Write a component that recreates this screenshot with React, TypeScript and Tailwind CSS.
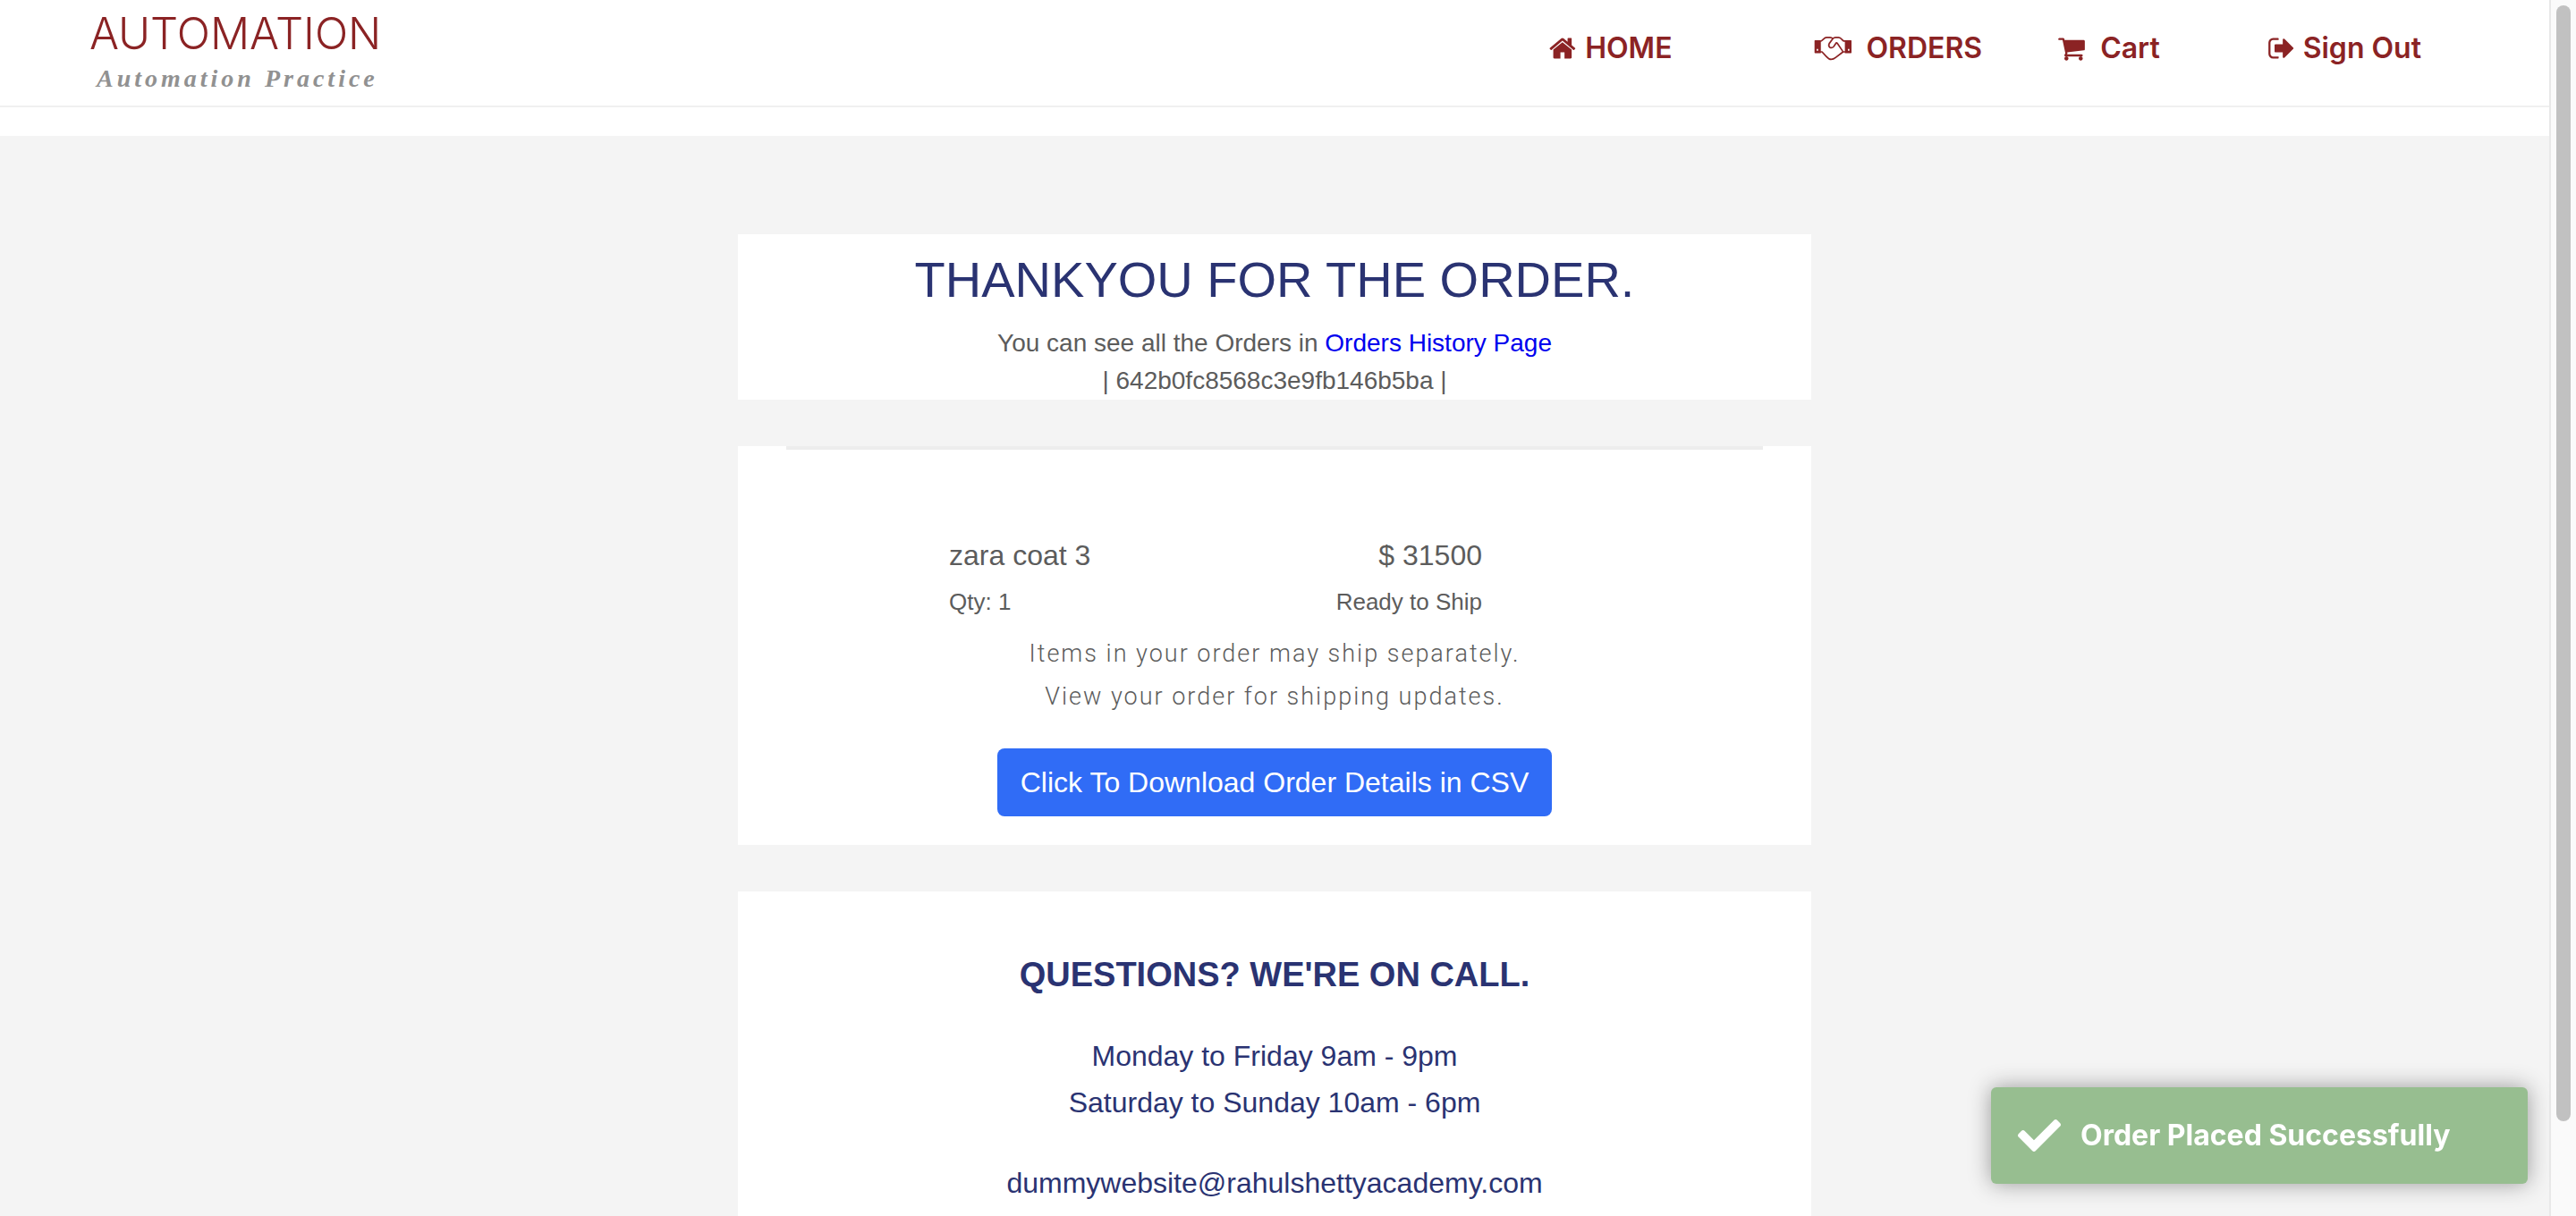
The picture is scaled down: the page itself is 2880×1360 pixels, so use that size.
import { FaCheck } from "react-icons/fa";

const HOME =
  "M1408 992v480q0 26-19 45t-45 19h-384v-384h-256v384h-384q-26 0-45-19t-19-45v-480q0-1 .5-3t.5-3l575-474 575 474q1 2 1 6zm223-69l-62 74q-8 9-21 11h-3q-13 0-21-7l-692-577-692 577q-12 8-24 7-13-2-21-11l-62-74q-8-10-7-23.500t11-21.500l719-599q32-26 76-26t76 26l244 204v-195q0-14 9-23t23-9h192q14 0 23 9t9 23v408l219 182q10 8 11 21.500t-7 23.500z";
const CART =
  "M704 1536q0 52-38 90t-90 38-90-38-38-90 38-90 90-38 90 38 38 90zm896 0q0 52-38 90t-90 38-90-38-38-90 38-90 90-38 90 38 38 90zm128-1088v512q0 24-16.500 42.500t-40.500 21.500l-1044 122q13 60 13 70 0 16-24 64h920q26 0 45 19t19 45-19 45-45 19h-1024q-26 0-45-19t-19-45q0-11 8-31.500t16-36 21.500-40 15.500-29.500l-177-823h-204q-26 0-45-19t-19-45 19-45 45-19h256q16 0 28.500 6.500t19.500 15.500 13 24.500 8 26 5.500 29.500 4.500 26h1201q26 0 45 19t19 45z";
const SIGN_OUT =
  "M704 1440q0 4 1 20t.5 26.500-3 23.500-10 19.500-20.500 6.500h-320q-119 0-203.500-84.500t-84.500-203.500v-704q0-119 84.500-203.500t203.500-84.500h320q13 0 22.500 9.500t9.500 22.500q0 4 1 20t.5 26.500-3 23.500-10 19.500-20.500 6.500h-320q-66 0-113 47t-47 113v704q0 66 47 113t113 47h312l11.500 1 11.500 3 8 5.500 7 9 2 13.500zm928-544q0 26-19 45l-544 544q-19 19-45 19t-45-19-19-45v-288h-448q-26 0-45-19t-19-45v-384q0-26 19-45t45-19h448v-288q0-26 19-45t45-19 45 19l544 544q19 19 19 45z";

function Icon({ d }: { d: string }) {
  return (
    <svg viewBox="0 0 1792 1792" className="size-8" fill="currentColor" aria-hidden="true">
      <path d={d} />
    </svg>
  );
}

function HandshakeIcon() {
  return (
    <svg viewBox="84 34 128 82" className="h-7 w-[43px]" fill="none" aria-hidden="true">
      <path
        fill="currentColor"
        fillRule="evenodd"
        d="M88 48h19v43H88q-2 0-2-2V50q0-2 2-2zm5 29v6h5v-6zM187 48h20q2 0 2 2v39q0 2-2 2h-20zm10 29v6h5v-6z"
      />
      <path
        stroke="currentColor"
        strokeWidth="5"
        strokeLinejoin="round"
        strokeLinecap="round"
        d="M107 51C114 48 118 39 126 39h12q5 0 9 4M107 87h4l14 15q9 10 16 10 8 0 15-6l25-19h6M187 51h-4C178 47 173 39 166 39H156q-5 0-9 4L135 59q-4 8 2 13 7 4 13-3l8-12q3 0 5 3l15 22q2 3 2 5"
      />
    </svg>
  );
}

function Header() {
  return (
    <header className="border-b-2 border-[#f0f0f0] bg-white">
      <div className="flex h-[118px] items-start justify-between pr-[143px] pl-[100px]">
        <a href="#" className="flex flex-col pt-3">
          <span className="font-['Inter'] text-[49px] leading-[52px] font-light text-[#8b2324]">AUTOMATION</span>
          <span className="pl-2 font-['Liberation_Serif'] text-[28px] leading-[48px] font-bold tracking-[4px] text-[#919191] italic">
            Automation Practice
          </span>
        </a>
        <nav className="flex pt-[30px] font-['Inter'] text-[32px] leading-[48px] font-semibold text-[#8b2324]">
          <button className="mr-[158px] flex items-center gap-2"><Icon d={HOME} />HOME</button>
          <button className="mr-[84px] flex items-center gap-4"><HandshakeIcon />ORDERS</button>
          <button className="mr-[120px] flex items-center gap-4"><Icon d={CART} />Cart</button>
          <button className="flex items-center gap-2"><Icon d={SIGN_OUT} />Sign Out</button>
        </nav>
      </div>
    </header>
  );
}

export default function App() {
  return (
    <div className="flex h-screen overflow-hidden bg-[#f4f4f4] font-['Liberation_Sans',sans-serif] text-[#5c5c5c]">
      <div className="min-w-0 flex-1 overflow-hidden">
        <div className="bg-white pb-8"><Header /></div>
        <main className="mx-auto flex max-w-[1200px] flex-col gap-[52px] pt-[110px]">
          <section className="bg-white pt-4 text-center">
            <h1 className="text-[56px] leading-[69px] text-[#2a3372]">THANKYOU FOR THE ORDER.</h1>
            <p className="pt-4 text-[28px] leading-[42px]">
              You can see all the Orders in <a href="#" className="text-[#0000ee]">Orders History Page</a>
            </p>
            <p className="text-[28px] leading-[42px]">| 642b0fc8568c3e9fb146b5ba |</p>
          </section>
          <section className="flex flex-col items-center bg-white px-[54px] pb-8">
            <hr className="w-full border-t-4 border-[#ededed]" />
            <table className="mt-[91px] mr-[314px] ml-[182px] w-[596px] self-start">
              <tbody>
                <tr className="text-[32px] leading-[54px]"><td>zara coat 3</td><td className="text-right">$ 31500</td></tr>
                <tr className="text-[26px] leading-[50px]"><td>Qty: 1</td><td className="text-right">Ready to Ship</td></tr>
              </tbody>
            </table>
            <p className="mt-[9px] text-center font-['Roboto'] text-[27px] leading-[48px] font-light tracking-[2px]">
              Items in your order may ship separately.<br />View your order for shipping updates.
            </p>
            <button className="mt-[34px] h-[76px] rounded-lg bg-[#306cf6] px-[26px] text-[32px] text-white">
              Click To Download Order Details in CSV
            </button>
          </section>
          <section className="bg-white pt-[60px] pb-20 text-center text-[32px] leading-[52px] text-[#2a3372]">
            <h2 className="text-[38px] leading-[66px] font-bold">QUESTIONS? WE'RE ON CALL.</h2>
            <p className="pt-8">Monday to Friday 9am - 9pm<br />Saturday to Sunday 10am - 6pm</p>
            <p className="pt-[38px]">dummywebsite@rahulshettyacademy.com</p>
          </section>
        </main>
      </div>
      <div className="w-[30px] border-l-2 border-[#e8e8e8] bg-[#fafafa] py-[6px] pl-[6px]">
        <div className="h-[92.6%] w-4 rounded-full bg-[#c1c1c1]" />
      </div>
      <div
        role="alert"
        className="fixed right-[54px] bottom-9 flex h-[108px] w-[600px] items-center gap-[22px] rounded-md bg-[#97be90] pl-[30px] font-['Inter'] text-[32px] font-bold text-white shadow-[0_0_24px_#999999]"
      >
        <FaCheck className="size-12" />Order Placed Successfully
      </div>
    </div>
  );
}
